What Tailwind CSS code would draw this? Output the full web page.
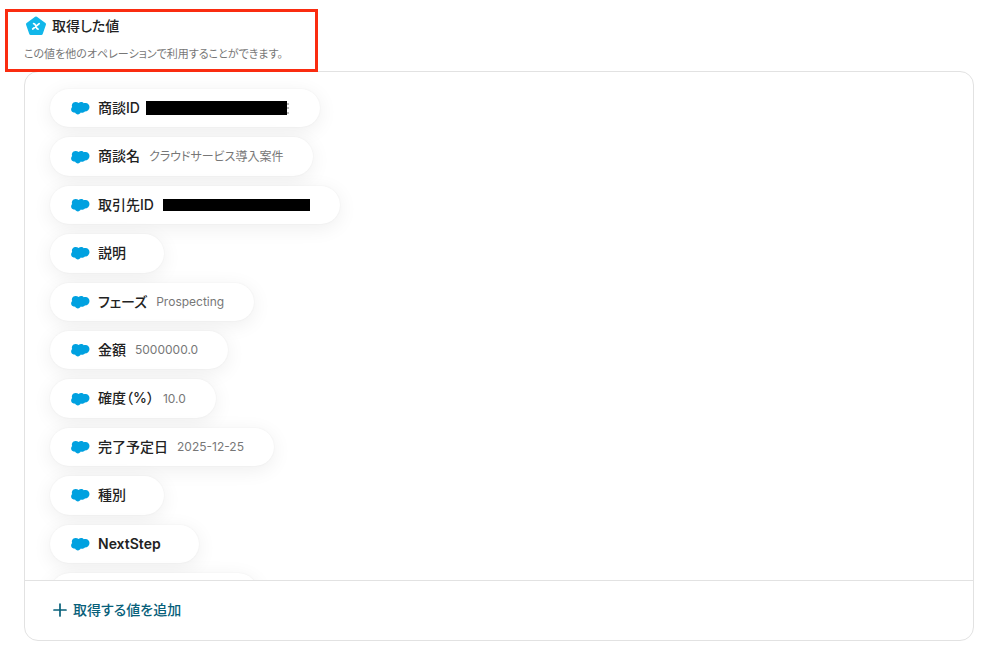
<!DOCTYPE html>
<html lang="ja">
<head>
    <meta charset="UTF-8">
    <meta name="viewport" content="width=device-width, initial-scale=1.0">
    <title>取得した値</title>
    <script src="https://cdn.jsdelivr.net/npm/@tailwindcss/browser@4"></script>
</head>
<body class="bg-white text-[#222] font-['Inter','Noto_Sans_CJK_JP',sans-serif] [font-feature-settings:'palt']">
    <svg class="hidden" aria-hidden="true">
        <symbol id="cloud" viewBox="0 0 20 14">
            <path fill="#00a1e0" d="M8.600 1.900C9.300 1.200 10.200.9 11.100.9c1.200 0 2.200.5 2.700 1.300.6-.2 1.200-.3 1.800-.2 2.200.1 3.900 1.900 3.900 4.100 0 2.600-2 4.500-4.700 4.500-.5.900-1.500 1.300-2.600 1.100-.6 0-1-.1-1.400-.2-.6 1.100-1.600 1.900-2.900 1.900-1.300 0-2.400-.7-2.900-1.800-1.900.4-3.900-.8-3.900-3 0-1 .4-1.900 1.100-2.500C1.200 3.800 2.700.8 5.600.9c1.200 0 2.200.4 3 1z"/>
        </symbol>
    </svg>

    <main class="h-screen flex flex-col pl-6 pr-[26px] pt-3 pb-3">
        <header class="relative h-[59px] shrink-0">
            <h1 class="flex items-center gap-1 text-sm leading-7 font-medium">
                <svg class="w-6 h-6" viewBox="0 0 24 24" aria-hidden="true">
                    <path d="M12 4 20.500 10.200 17.300 19.500H6.700L3.500 10.200z" fill="#12b7ea" stroke="#12b7ea" stroke-width="3" stroke-linejoin="round"/>
                    <path d="M9.600 9.600c.9 0 1.300.4 1.700 1.300l1.400 3.300c.3.700.6.900 1.400.9M15.200 9.700 8.700 15" fill="none" stroke="#fff" stroke-width="1.700" stroke-linecap="round"/>
                </svg>
                取得した値
            </h1>
            <p class="text-[11px] leading-7 text-[#777]">この値を他のオペレーションで利用することができます。</p>
            <!-- highlight frame -->
            <div class="absolute z-10 -left-[19px] -top-[3px] w-[313px] h-[63px] border-3 border-[#fa2c10]"></div>
        </header>

        <section class="flex-1 min-h-0 flex flex-col border border-[#e2e2e2] rounded-[14px] overflow-hidden">
            <ul class="flex-1 min-h-0 overflow-y-auto [scrollbar-width:none] flex flex-col items-start gap-2.5 pl-[25px] pt-[17px] text-sm leading-[1.6] font-medium">
                <li class="flex items-center gap-2 shrink-0 rounded-full bg-white py-2 pl-5 pr-[30px] shadow-[0_0_2px_rgba(0,0,0,0.06),0_4px_20px_rgba(0,0,0,0.07)]">
                    <svg class="w-5 h-3.5" aria-hidden="true"><use href="#cloud"/></svg>
                    <span>商談ID</span>
                    <svg class="w-36 h-3.5 -ml-0.5" viewBox="0 0 144 14" aria-hidden="true">
                        <path d="M0 0h141v14H0z"/>
                        <path d="M141 3h2M141 7h2M141 12h2" stroke="#777"/>
                    </svg>
                </li>
                <li class="flex items-center gap-2 shrink-0 rounded-full bg-white py-2 pl-5 pr-[30px] shadow-[0_0_2px_rgba(0,0,0,0.06),0_4px_20px_rgba(0,0,0,0.07)]">
                    <svg class="w-5 h-3.5" aria-hidden="true"><use href="#cloud"/></svg>
                    <span>商談名</span>
                    <span class="ml-px text-xs font-normal text-[#777]">クラウドサービス導入案件</span>
                </li>
                <li class="flex items-center gap-2 shrink-0 rounded-full bg-white py-2 pl-5 pr-[30px] shadow-[0_0_2px_rgba(0,0,0,0.06),0_4px_20px_rgba(0,0,0,0.07)]">
                    <svg class="w-5 h-3.5" aria-hidden="true"><use href="#cloud"/></svg>
                    <span>取引先ID</span>
                    <span class="ml-px w-[147px] h-3 bg-black"></span>
                </li>
                <li class="flex items-center gap-2 shrink-0 rounded-full bg-white py-2 pl-5 pr-[30px] shadow-[0_0_2px_rgba(0,0,0,0.06),0_4px_20px_rgba(0,0,0,0.07)]">
                    <svg class="w-5 h-3.5" aria-hidden="true"><use href="#cloud"/></svg>
                    <span>説明</span>
                    <span></span>
                </li>
                <li class="flex items-center gap-2 shrink-0 rounded-full bg-white py-2 pl-5 pr-[30px] shadow-[0_0_2px_rgba(0,0,0,0.06),0_4px_20px_rgba(0,0,0,0.07)]">
                    <svg class="w-5 h-3.5" aria-hidden="true"><use href="#cloud"/></svg>
                    <span>フェーズ</span>
                    <span class="ml-px text-xs font-normal text-[#777]">Prospecting</span>
                </li>
                <li class="flex items-center gap-2 shrink-0 rounded-full bg-white py-2 pl-5 pr-[30px] shadow-[0_0_2px_rgba(0,0,0,0.06),0_4px_20px_rgba(0,0,0,0.07)]">
                    <svg class="w-5 h-3.5" aria-hidden="true"><use href="#cloud"/></svg>
                    <span>金額</span>
                    <span class="ml-px text-xs font-normal text-[#777]">5000000.0</span>
                </li>
                <li class="flex items-center gap-2 shrink-0 rounded-full bg-white py-2 pl-5 pr-[30px] shadow-[0_0_2px_rgba(0,0,0,0.06),0_4px_20px_rgba(0,0,0,0.07)]">
                    <svg class="w-5 h-3.5" aria-hidden="true"><use href="#cloud"/></svg>
                    <span>確度（%）</span>
                    <span class="ml-px text-xs font-normal text-[#777]">10.0</span>
                </li>
                <li class="flex items-center gap-2 shrink-0 rounded-full bg-white py-2 pl-5 pr-[30px] shadow-[0_0_2px_rgba(0,0,0,0.06),0_4px_20px_rgba(0,0,0,0.07)]">
                    <svg class="w-5 h-3.5" aria-hidden="true"><use href="#cloud"/></svg>
                    <span>完了予定日</span>
                    <span class="ml-px text-xs font-normal text-[#777]">2025-12-25</span>
                </li>
                <li class="flex items-center gap-2 shrink-0 rounded-full bg-white py-2 pl-5 pr-[30px] shadow-[0_0_2px_rgba(0,0,0,0.06),0_4px_20px_rgba(0,0,0,0.07)]">
                    <svg class="w-5 h-3.5" aria-hidden="true"><use href="#cloud"/></svg>
                    <span>種別</span>
                    <span></span>
                </li>
                <li class="flex items-center gap-2 shrink-0 rounded-full bg-white py-2 pl-5 pr-[30px] shadow-[0_0_2px_rgba(0,0,0,0.06),0_4px_20px_rgba(0,0,0,0.07)]">
                    <svg class="w-5 h-3.5" aria-hidden="true"><use href="#cloud"/></svg>
                    <span class="font-semibold">NextStep</span>
                    <span></span>
                </li>
                <li class="w-52 h-10 shrink-0 rounded-full bg-white shadow-[0_0_2px_rgba(0,0,0,0.06),0_4px_20px_rgba(0,0,0,0.07)]"></li>
            </ul>
            <div class="h-[60px] shrink-0 flex items-center pl-7 pb-0.5 border-t border-[#e2e2e2]">
                <button type="button" class="flex items-center gap-1.5 text-sm font-medium text-[#07607a]">
                    <svg class="w-3.5 h-3.5" viewBox="0 0 14 14" fill="none" stroke="currentColor" stroke-width="1.700" stroke-linecap="round" aria-hidden="true"><path d="M7 1v12M1 7h12"/></svg>
                    取得する値を追加
                </button>
            </div>
        </section>
    </main>
</body>
</html>
